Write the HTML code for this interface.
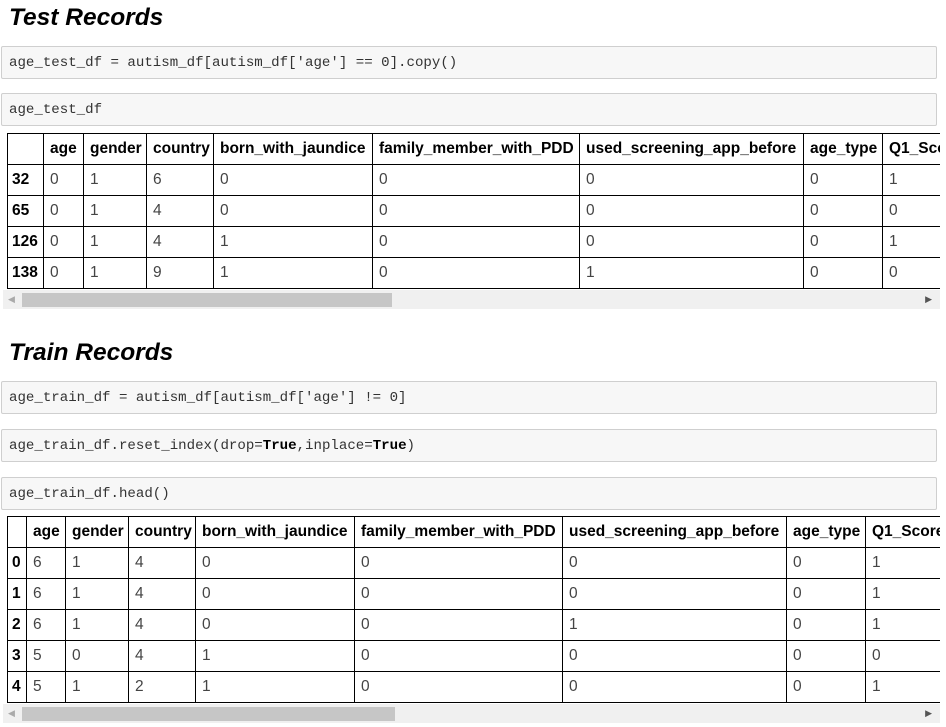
<!DOCTYPE html>
<html><head><style>
body{margin:0;background:#fff;width:946px;height:727px;overflow:hidden;position:relative;font-family:"Liberation Sans",Arial,sans-serif}
h2{position:absolute;left:9px;margin:0;font-size:24.5px;font-weight:bold;font-style:italic;color:#000}
.code{position:absolute;left:1px;width:936px;height:33px;background:#f7f7f7;border:1px solid #cfcfcf;border-radius:2px;font-family:"Liberation Mono",monospace;font-size:14.1px;line-height:33px;padding-left:7px;box-sizing:border-box;color:#333}
.code b{color:#000}
.wrap{position:absolute;left:7px;width:933px;overflow:hidden}
table{border-collapse:collapse;table-layout:fixed;font-size:15.5px}
td,th{border:1px solid #000;height:31px;padding:0 0 0 6px;text-align:left;white-space:nowrap;overflow:hidden;box-sizing:border-box}
th{font-weight:bold;color:#000}
td{color:#444}
tbody th{padding-left:4px}
.sb{position:absolute;left:3px;width:937px;height:19px;background:#f0f0f0}
.th{position:absolute;top:3px;height:14px;left:19px;background:#c6c6c6}
.la{position:absolute;left:5px;top:4px;font-size:9px;color:#aaa}
.ra{position:absolute;right:8px;top:4px;font-size:9px;color:#555}
</style></head><body>
<h2 style="top:4px">Test Records</h2>
<div class="code" style="top:46px">age_test_df = autism_df[autism_df['age'] == 0].copy()</div>
<div class="code" style="top:93px">age_test_df</div>
<div class="wrap" style="top:133px">
<table style="width:1000px">
<colgroup><col style="width:36px"><col style="width:40px"><col style="width:63px"><col style="width:67px"><col style="width:159px"><col style="width:207px"><col style="width:224px"><col style="width:79px"><col style="width:125px"></colgroup>
<thead><tr><th></th><th>age</th><th>gender</th><th>country</th><th>born_with_jaundice</th><th>family_member_with_PDD</th><th>used_screening_app_before</th><th>age_type</th><th>Q1_Score</th></tr></thead>
<tbody>
<tr><th>32</th><td>0</td><td>1</td><td>6</td><td>0</td><td>0</td><td>0</td><td>0</td><td>1</td></tr>
<tr><th>65</th><td>0</td><td>1</td><td>4</td><td>0</td><td>0</td><td>0</td><td>0</td><td>0</td></tr>
<tr><th>126</th><td>0</td><td>1</td><td>4</td><td>1</td><td>0</td><td>0</td><td>0</td><td>1</td></tr>
<tr><th>138</th><td>0</td><td>1</td><td>9</td><td>1</td><td>0</td><td>1</td><td>0</td><td>0</td></tr>
</tbody></table></div>
<div class="sb" style="top:290px"><span class="la">◀</span><div class="th" style="width:370px"></div><span class="ra">▶</span></div>

<h2 style="top:339px">Train Records</h2>
<div class="code" style="top:381px">age_train_df = autism_df[autism_df['age'] != 0]</div>
<div class="code" style="top:429px">age_train_df.reset_index(drop=<b>True</b>,inplace=<b>True</b>)</div>
<div class="code" style="top:477px">age_train_df.head()</div>
<div class="wrap" style="top:516px">
<table style="width:1000px">
<colgroup><col style="width:19px"><col style="width:39px"><col style="width:63px"><col style="width:67px"><col style="width:159px"><col style="width:208px"><col style="width:224px"><col style="width:79px"><col style="width:142px"></colgroup>
<thead><tr><th></th><th>age</th><th>gender</th><th>country</th><th>born_with_jaundice</th><th>family_member_with_PDD</th><th>used_screening_app_before</th><th>age_type</th><th>Q1_Score</th></tr></thead>
<tbody>
<tr><th>0</th><td>6</td><td>1</td><td>4</td><td>0</td><td>0</td><td>0</td><td>0</td><td>1</td></tr>
<tr><th>1</th><td>6</td><td>1</td><td>4</td><td>0</td><td>0</td><td>0</td><td>0</td><td>1</td></tr>
<tr><th>2</th><td>6</td><td>1</td><td>4</td><td>0</td><td>0</td><td>1</td><td>0</td><td>1</td></tr>
<tr><th>3</th><td>5</td><td>0</td><td>4</td><td>1</td><td>0</td><td>0</td><td>0</td><td>0</td></tr>
<tr><th>4</th><td>5</td><td>1</td><td>2</td><td>1</td><td>0</td><td>0</td><td>0</td><td>1</td></tr>
</tbody></table></div>
<div class="sb" style="top:704px"><span class="la">◀</span><div class="th" style="width:373px"></div><span class="ra">▶</span></div>
</body></html>
